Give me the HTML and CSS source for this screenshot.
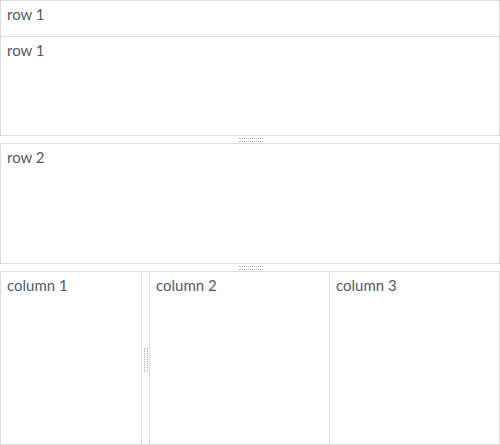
FILE: index.html
```html
<!DOCTYPE html>
<html>
<head>
<meta charset="utf-8">
<link rel="stylesheet" href="styles.css">
</head>
<body>
<div class="layout">
  <div class="cell cell-top"><div class="tpl">row 1</div></div>
  <div class="cell cell-a"><div class="tpl">row 1</div></div>
  <div class="resizer-y"><div class="handle-y"></div></div>
  <div class="cell cell-b"><div class="tpl">row 2</div></div>
  <div class="resizer-y"><div class="handle-y"></div></div>
  <div class="cols">
    <div class="cell col col-1"><div class="tpl">column 1</div></div>
    <div class="resizer-x"><div class="handle-x"></div></div>
    <div class="cell col col-2"><div class="tpl">column 2</div></div>
    <div class="cell col col-3"><div class="tpl">column 3</div></div>
  </div>
</div>
</body>
</html>
```
FILE: styles.css
```css
html, body {
  margin: 0;
  padding: 0;
  background: #ffffff;
}
.layout {
  width: 500px;
  height: 445px;
  display: flex;
  flex-direction: column;
  box-sizing: border-box;
  font-family: Lato, "Open Sans", sans-serif;
  font-size: 15px;
  color: #505b68;
}
.cell {
  box-sizing: border-box;
  border: 1px solid #dddddd;
  background: #ffffff;
}
.tpl {
  padding: 3px 6px 0 6px;
  line-height: 20px;
}
.cell-top {
  height: 37px;
  flex: none;
}
.cell-a {
  height: 99px;
  border-top: none;
  flex: none;
}
.cell-b {
  height: 121px;
  flex: none;
}
.resizer-y {
  height: 7px;
  flex: none;
  display: flex;
  justify-content: center;
  align-items: center;
}
.handle-y {
  width: 24px;
  height: 2px;
  border-top: 1px dotted #9fb0bf;
  border-bottom: 1px dotted #9fb0bf;
  margin-left: 1px;
}
.cols {
  flex: 1;
  display: flex;
  min-height: 0;
}
.col {
  height: 100%;
}
.col-1 {
  width: 142px;
  flex: none;
}
.col-2 {
  width: 181px;
  flex: none;
}
.col-3 {
  flex: 1;
  border-left: none;
}
.resizer-x {
  width: 7px;
  flex: none;
  box-sizing: border-box;
  border-top: 1px solid #dddddd;
  border-bottom: 1px solid #dddddd;
  display: flex;
  align-items: center;
  justify-content: center;
}
.handle-x {
  width: 2px;
  height: 24px;
  border-left: 1px dotted #9fb0bf;
  border-right: 1px dotted #9fb0bf;
  margin-top: 3px;
}
```
